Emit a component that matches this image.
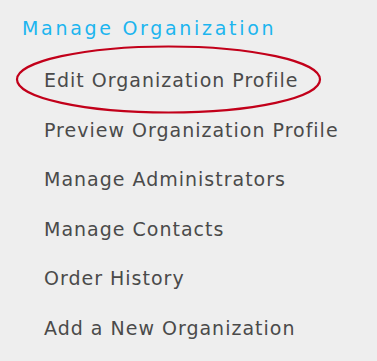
import React from "react";

const items = [
  "Edit Organization Profile",
  "Preview Organization Profile",
  "Manage Administrators",
  "Manage Contacts",
  "Order History",
  "Add a New Organization",
];

export default function App() {
  return (
    <div
      className="relative w-[377px] h-[361px] bg-[#eeeeee] overflow-hidden pl-[22px] pt-[14px]"
      style={{ fontFamily: '"DejaVu Sans", "Liberation Sans", sans-serif' }}
    >
      <h2 className="text-[19px] leading-[28px] text-[#1cb5ef] tracking-[2.7px]">
        Manage Organization
      </h2>
      <ul className="pl-[22px] mt-[14px]">
        {items.map((t) => (
          <li
            key={t}
            className="h-[49.6px] leading-[49.6px] text-[19px] text-[#4a4a4a] tracking-[1px]"
          >
            {t}
          </li>
        ))}
      </ul>
      <svg
        className="absolute left-0 top-0 pointer-events-none"
        width="377"
        height="361"
      >
        <ellipse
          cx="168.5"
          cy="79.5"
          rx="151.5"
          ry="33"
          fill="none"
          stroke="#c2001a"
          strokeWidth="2.2"
        />
      </svg>
    </div>
  );
}
